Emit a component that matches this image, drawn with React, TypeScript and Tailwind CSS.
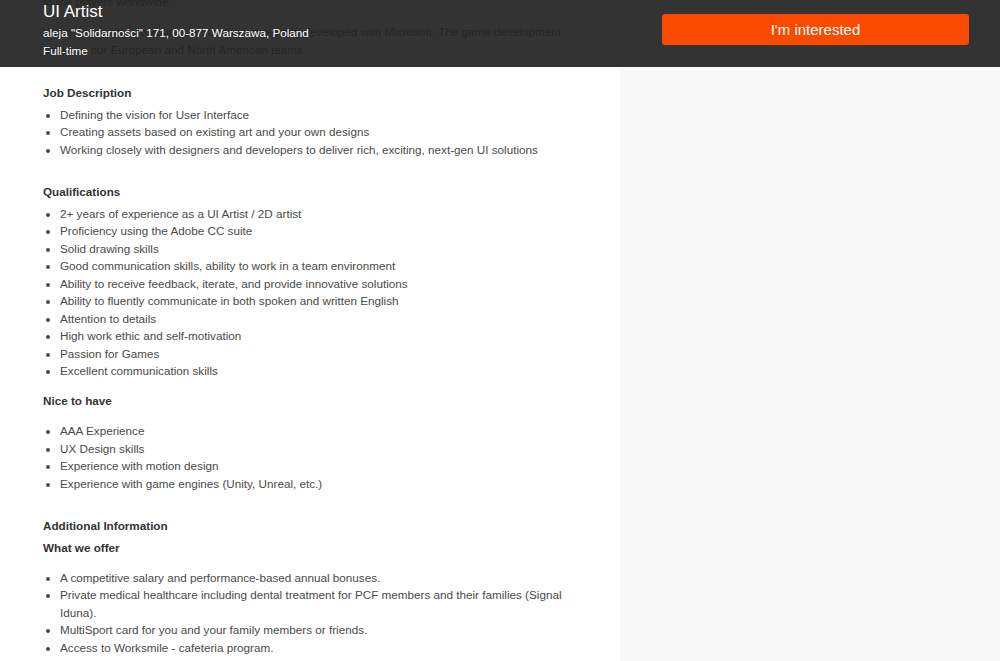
import React from "react";

const jobDescription = [
  "Defining the vision for User Interface",
  "Creating assets based on existing art and your own designs",
  "Working closely with designers and developers to deliver rich, exciting, next-gen UI solutions",
];

const qualifications = [
  "2+ years of experience as a UI Artist / 2D artist",
  "Proficiency using the Adobe CC suite",
  "Solid drawing skills",
  "Good communication skills, ability to work in a team environment",
  "Ability to receive feedback, iterate, and provide innovative solutions",
  "Ability to fluently communicate in both spoken and written English",
  "Attention to details",
  "High work ethic and self-motivation",
  "Passion for Games",
  "Excellent communication skills",
];

const niceToHave = [
  "AAA Experience",
  "UX Design skills",
  "Experience with motion design",
  "Experience with game engines (Unity, Unreal, etc.)",
];

const offer = [
  "A competitive salary and performance-based annual bonuses.",
  "Private medical healthcare including dental treatment for PCF members and their families (Signal Iduna).",
  "MultiSport card for you and your family members or friends.",
  "Access to Worksmile - cafeteria program.",
];

function BulletList({ items, className = "" }: { items: string[]; className?: string }) {
  return (
    <ul className={`list-disc pl-[17px] ${className}`}>
      {items.map((item) => (
        <li key={item}>{item}</li>
      ))}
    </ul>
  );
}

function Heading({ children, className = "" }: { children: React.ReactNode; className?: string }) {
  return <h3 className={`font-bold text-[#333] ${className}`}>{children}</h3>;
}

export default function App() {
  return (
    <div
      className="relative h-[661px] overflow-hidden bg-white text-[11.7px] leading-[17.5px] text-[#4a4a4a]"
      style={{ fontFamily: '"Liberation Sans", Arial, sans-serif' }}
    >
      <div className="flex h-full">
        <main className="w-[620px] shrink-0 px-[43px]">
          {/* page is scrolled: the intro sits under the sticky header */}
          <p className="-mt-[7px] whitespace-nowrap">to the players worldwide.</p>
          <p className="mt-[12.5px] whitespace-nowrap">
            We are currently working on an unannounced title developed with Microsoft. The game development
            <br />
            between our European and North American teams.
          </p>

          <Heading className="mt-[25.5px]">Job Description</Heading>
          <BulletList items={jobDescription} className="mt-[4.5px]" />

          <Heading className="mt-[24.5px]">Qualifications</Heading>
          <BulletList items={qualifications} className="mt-[4.5px]" />

          <Heading className="mt-[12.5px]">Nice to have</Heading>
          <BulletList items={niceToHave} className="mt-[12.5px]" />

          <Heading className="mt-[25px]">Additional Information</Heading>
          <Heading className="mt-[4.5px]">What we offer</Heading>
          <BulletList items={offer} className="mt-[12px]" />
        </main>
        <aside className="flex-1 bg-[#f8f8f8]" />
      </div>

      <header className="absolute inset-x-0 top-0 flex h-[67px] bg-[#222]/[0.92] text-white">
        <div className="w-[620px] shrink-0 px-[43px] pt-[2px]">
          <h1 className="text-[17px] leading-[20px]">UI Artist</h1>
          <p className="mt-[2px]">aleja "Solidarności" 171, 00-877 Warszawa, Poland</p>
          <p>Full-time</p>
        </div>
        <div className="flex-1 pl-[42px] pr-[31px] pt-[14px]">
          <button className="h-[31px] w-full rounded-[3px] bg-[#fa4a00] text-[15px] text-white">
            I'm interested
          </button>
        </div>
      </header>
    </div>
  );
}
